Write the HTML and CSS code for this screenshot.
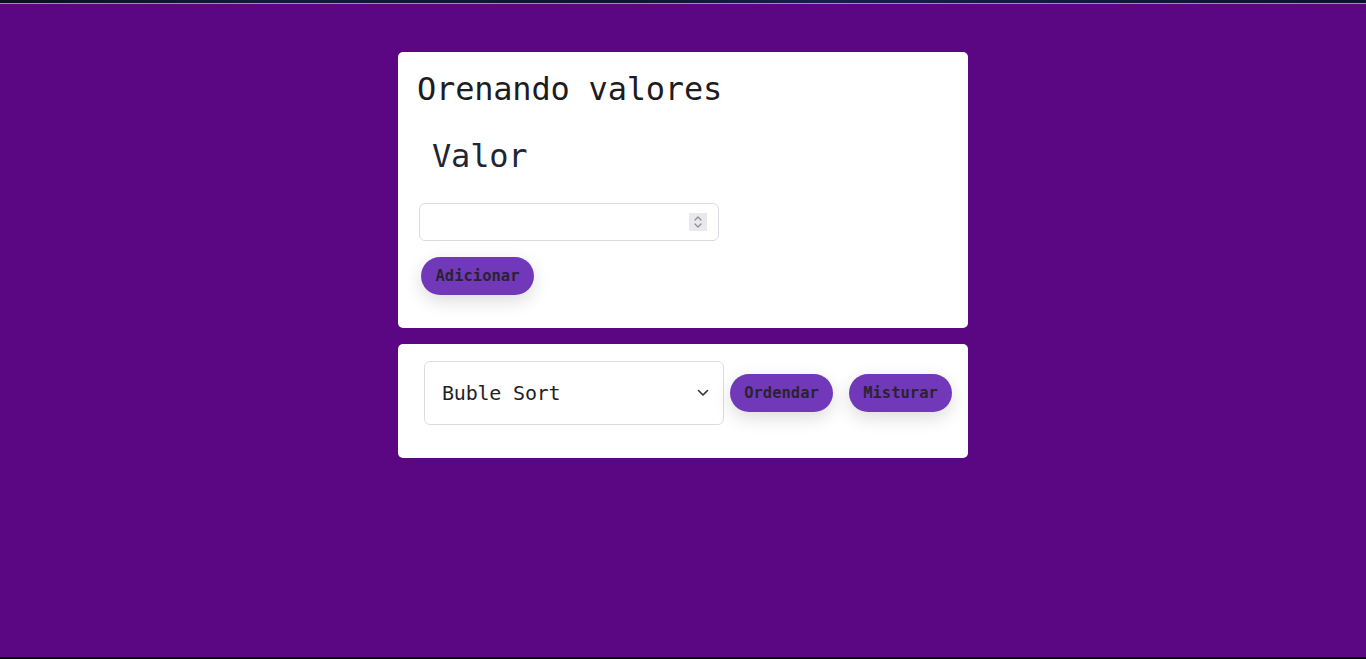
FILE: index.html
```html
<!DOCTYPE html>
<html lang="pt">
<head>
<meta charset="utf-8">
<title>Orenando valores</title>
<link rel="stylesheet" href="styles.css">
</head>
<body>
<div class="topstrip"></div>
<main class="stage">
  <section class="card card-add">
    <h1 class="title">Orenando valores</h1>
    <label class="label">Valor</label>
    <div class="field">
      <input class="field-input" type="text" aria-label="Valor">
      <span class="spinner">
        <svg width="10" height="14" viewBox="0 0 10 14" fill="none" stroke="#8a8a92" stroke-width="1.2" stroke-linecap="round" stroke-linejoin="round"><path d="M2 5 L5 2 L8 5"/><path d="M2 9 L5 12 L8 9"/></svg>
      </span>
    </div>
    <button class="btn btn-add">Adicionar</button>
  </section>
  <section class="card card-sort">
    <div class="select">
      <span class="select-text">Buble Sort</span>
      <svg class="chev" width="12" height="8" viewBox="0 0 12 8" fill="none" stroke="#333" stroke-width="1.6" stroke-linecap="round" stroke-linejoin="round"><path d="M1.5 1.5 L6 6 L10.5 1.5"/></svg>
    </div>
    <button class="btn">Ordendar</button>
    <button class="btn btn-mix">Misturar</button>
  </section>
</main>
</body>
</html>
```
FILE: styles.css
```css
html, body {
  margin: 0;
  padding: 0;
  height: 100%;
}
body {
  display: flex;
  flex-direction: column;
  background: #000;
  font-family: "DejaVu Sans Mono", "Liberation Mono", monospace;
}
.topstrip {
  height: 3px;
  background: linear-gradient(90deg, #0a0f24 0%, #101a3d 20%, #0c1431 45%, #15204a 60%, #0b1130 100%);
  border-bottom: 1px solid #8f94b8;
  flex: none;
}
.stage {
  flex: 1;
  background: #5b0784;
  border-bottom: 2px solid #000;
  display: flex;
  flex-direction: column;
  align-items: center;
  padding-top: 48px;
  gap: 16px;
}
.card {
  width: 570px;
  background: #fff;
  border-radius: 5px;
  box-sizing: border-box;
}
.card-add {
  height: 276px;
  padding: 18px 18px 0 19px;
  display: flex;
  flex-direction: column;
  align-items: flex-start;
}
.title {
  margin: 0;
  font-size: 32px;
  font-weight: normal;
  line-height: 38px;
  color: #1c1c22;
  letter-spacing: -0.2px;
}
.label {
  margin: 29px 0 0 15px;
  font-size: 32px;
  line-height: 38px;
  color: #1f2633;
  letter-spacing: -0.2px;
}
.field {
  margin: 28px 0 0 2px;
  width: 300px;
  height: 38px;
  box-sizing: border-box;
  border: 1px solid #dcdce0;
  border-radius: 6px;
  display: flex;
  align-items: center;
  padding: 0 11px 0 10px;
}
.field-input {
  flex: 1;
  border: 0;
  outline: none;
  font: inherit;
  font-size: 16px;
  min-width: 0;
  background: transparent;
}
.spinner {
  width: 18px;
  height: 18px;
  background: #e9e9ed;
  display: flex;
  align-items: center;
  justify-content: center;
}
.btn {
  height: 38px;
  padding: 0 13px;
  border: 0;
  border-radius: 19px;
  background: #7139ba;
  color: #2a2233;
  font-family: "DejaVu Sans Mono", "Liberation Mono", monospace;
  font-weight: bold;
  font-size: 15.5px;
  box-shadow: 0 6px 18px rgba(0, 0, 0, 0.14);
  cursor: pointer;
}
.btn-add {
  margin: 16px 0 0 4px;
  width: 113px;
}
.card-sort {
  height: 114px;
  padding: 17px 0 0 26px;
  display: flex;
  align-items: flex-start;
}
.select {
  width: 300px;
  height: 64px;
  box-sizing: border-box;
  border: 1px solid #dcdce0;
  border-radius: 6px;
  display: flex;
  align-items: center;
  justify-content: space-between;
  padding: 0 14px 0 17px;
  margin-right: 6px;
}
.select-text {
  font-size: 20px;
  color: #1f1f24;
  letter-spacing: -0.2px;
}
.card-sort .btn {
  margin-top: 13px;
  width: 103px;
  padding: 0;
}
.card-sort .btn-mix {
  margin-left: 16px;
}
```
